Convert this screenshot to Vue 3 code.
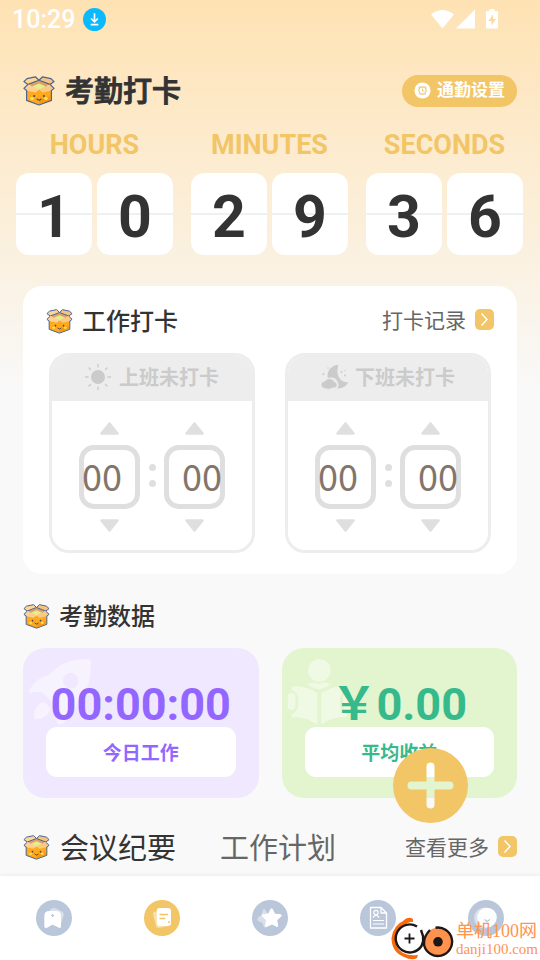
<script setup>
import { ref, h } from 'vue'

const clock = [
  { label: 'HOURS', digits: ['1', '0'] },
  { label: 'MINUTES', digits: ['2', '9'] },
  { label: 'SECONDS', digits: ['3', '6'] },
]

const shifts = ref([
  { id: 'on', title: '上班未打卡', hour: 0, minute: 0 },
  { id: 'off', title: '下班未打卡', hour: 0, minute: 0 },
])

const fields = [
  { key: 'hour', label: '小时', max: 24 },
  { key: 'minute', label: '分钟', max: 60 },
]

const pad = (n) => String(n).padStart(2, '0')

function step(shift, field, delta) {
  shift[field.key] = (shift[field.key] + delta + field.max) % field.max
}

function setValue(shift, field, event) {
  const n = parseInt(event.target.value, 10)
  shift[field.key] = Number.isNaN(n) ? 0 : Math.min(Math.max(n, 0), field.max - 1)
  event.target.value = pad(shift[field.key])
}

const tabs = ['会议纪要', '工作计划']
const activeTab = ref(0)

const navItems = [
  { id: 'home', label: '首页' },
  { id: 'attendance', label: '考勤' },
  { id: 'star', label: '收藏' },
  { id: 'report', label: '报告' },
  { id: 'mine', label: '我的' },
]
const activeNav = ref('attendance')

const outline = { stroke: '#4a6590', 'stroke-width': 1.2, 'stroke-linejoin': 'round' }
const BoxIcon = () =>
  h('svg', { viewBox: '0 0 32 30', 'aria-hidden': 'true' }, [
    h('path', { d: 'M3.6 12V24.4L16 29L28.4 24.4V12L16 8Z', fill: '#ffaa1e', ...outline }),
    h('path', { d: 'M16 24V28.2L27.7 24V20Z', fill: '#f28c0c', opacity: 0.6 }),
    h('path', { d: 'M4.5 8L16 4.2L27.5 8L16 13.8Z', fill: '#dfa068' }),
    h('path', { d: 'M9 10.6L16 7.6L23 10.6L16 14Z', fill: '#e2f08c' }),
    h('path', { d: 'M0.9 5.6L4 2.6L12.4 0.8L16 4.2L5 8.4Z', fill: '#ffd596', ...outline }),
    h('path', { d: 'M31.1 5.6L28 2.6L19.6 0.8L16 4.2L27 8.4Z', fill: '#f8c380', ...outline }),
    h('path', { d: 'M5 8.4L0.9 12.4L4 14.8L12.5 16.6L16 13.4Z', fill: '#ffd090' }),
    h('path', { d: 'M27 8.4L31.1 12.4L28 14.8L19.5 16.6L16 13.4Z', fill: '#fcc983' }),
    h('path', { d: 'M5 8.4L0.9 12.4L4 14.8M27 8.4L31.1 12.4L28 14.8', fill: 'none', ...outline }),
    h('ellipse', { cx: 9, cy: 22.6, rx: 1.8, ry: 1.3, fill: '#ffe84a' }),
    h('ellipse', { cx: 23, cy: 22.6, rx: 1.8, ry: 1.3, fill: '#ffe84a' }),
    h('circle', { cx: 11.2, cy: 20, r: 1, fill: '#4a4250' }),
    h('circle', { cx: 20.8, cy: 20, r: 1, fill: '#4a4250' }),
    h('path', { d: 'M13.6 22.6Q16 25.6 18.4 22.6', fill: 'none', stroke: '#5a4440', 'stroke-width': 1.1 }),
  ])
</script>

<template>
  <div class="page">
    <header class="status">
      <span class="time">10:29</span>
      <svg class="download" viewBox="0 0 24 24" aria-hidden="true">
        <circle cx="12" cy="12" r="12" fill="#0cb9fb" />
        <path d="M12 5.5V14M8.5 11L12 14.5L15.5 11M8 17.3H16" fill="none" stroke="#fff" stroke-width="1.7" />
      </svg>
      <svg class="signals" viewBox="0 0 68 20" aria-hidden="true">
        <path d="M0 5.5Q11.500 -3.500 23 5.500L11.500 19.500Z" fill="#fff" />
        <path d="M25 19.500L44 0.500V19.500Z" fill="#fff" />
        <path d="M55 3Q55 2 56 2H58.500V0H63.500V2H66Q67 2 67 3V18.500Q67 19.500 66 19.500H56Q55 19.500 55 18.500Z" fill="#fff" />
        <path d="M62 5.500L57.500 12H60.500V16.500L65 10H62Z" fill="#fbd9a0" />
      </svg>
    </header>

    <div class="topbar">
      <BoxIcon class="box-lg" />
      <h1>考勤打卡</h1>
      <button type="button" class="pill">
        <svg viewBox="0 0 18 18" aria-hidden="true">
          <circle cx="9" cy="9" r="8.500" fill="#fff" />
          <g fill="none" stroke="#f2c566">
            <circle cx="9" cy="9" r="3.800" stroke-width="1.200" />
            <path d="M9 7V9.500H11M4.500 6.500L6.500 4.500M13.500 6.500L11.500 4.500M6.500 12.500L5.500 13.500M11.500 12.500L12.500 13.500" />
          </g>
        </svg>
        通勤设置
      </button>
    </div>

    <main>
      <section class="clock" aria-label="时钟">
        <div v-for="unit in clock" :key="unit.label" class="unit">
          <span class="unit-label">{{ unit.label }}</span>
          <div class="digits">
            <span v-for="(d, i) in unit.digits" :key="i" class="digit">{{ d }}</span>
          </div>
        </div>
      </section>

      <section class="punch">
        <div class="head">
          <BoxIcon class="box" />
          <h2>工作打卡</h2>
          <a href="#records" class="more">
            打卡记录
            <svg viewBox="0 0 19 21" aria-hidden="true">
              <rect width="19" height="21" rx="5" fill="#f2c566" />
              <path d="M6.500 4.500L12 10.500L6.500 16.500" fill="none" stroke="#fff" stroke-width="1.500" />
            </svg>
          </a>
        </div>

        <div class="panels">
          <div v-for="shift in shifts" :key="shift.id" class="panel">
            <h3>
              <svg v-if="shift.id === 'on'" viewBox="0 0 27 26" aria-hidden="true">
                <circle cx="13" cy="13" r="7" fill="#cbcbcb" />
                <path
                  d="M13 0.500V3M13 23V25.500M0.500 13H3M23 13H25.500M4 4L5.500 5.500M20.500 20.500L22 22M22 4L20.500 5.500M5.500 20.500L4 22"
                  stroke="#cbcbcb" stroke-width="1.400" stroke-linecap="round" />
              </svg>
              <svg v-else viewBox="0 0 27 26" aria-hidden="true">
                <path d="M17.300 0.800C9.500 1.500 5.500 8 6.800 14C12 12.500 16 15 16.500 18C18.500 20 17.500 22.500 16 24.500C21 24.800 25.500 22.500 27 18.300C18.500 18.500 14.500 11 17.300 0.800Z" fill="#cbcbcb" />
                <path d="M3.500 24.500Q0 23.800 0 20.800Q0 17.600 3.500 17.300Q5 14.500 8.500 14.600Q12 14.600 13.200 17.500Q16.500 18.300 16.200 21.500Q15.500 24.500 12 24Q8 26.500 3.500 24.500Z" fill="#cbcbcb" stroke="#ededed" stroke-width="0.800" />
                <circle cx="2.500" cy="10" r="1" fill="#cbcbcb" />
                <circle cx="7" cy="4" r="0.700" fill="#cbcbcb" />
                <circle cx="20.500" cy="8" r="1" fill="#cbcbcb" />
                <circle cx="24" cy="6.500" r="0.700" fill="#cbcbcb" />
                <circle cx="24" cy="11.500" r="1" fill="#cbcbcb" />
              </svg>
              {{ shift.title }}
            </h3>
            <div class="picker">
              <div v-for="field in fields" :key="field.key" class="col" :class="field.key">
                <button type="button" :aria-label="`${field.label}加`" @click="step(shift, field, 1)">
                  <svg viewBox="0 0 19 13" aria-hidden="true">
                    <path d="M9.500 1.500L17.500 11.500H1.500Z" fill="#dfdfdf" stroke="#dfdfdf" stroke-width="2.500" stroke-linejoin="round" />
                  </svg>
                </button>
                <input
                  type="text" inputmode="numeric" :aria-label="`${shift.title}${field.label}`"
                  :value="pad(shift[field.key])" @change="setValue(shift, field, $event)" />
                <button type="button" :aria-label="`${field.label}减`" @click="step(shift, field, -1)">
                  <svg viewBox="0 0 19 13" aria-hidden="true">
                    <path d="M9.500 11.500L17.500 1.500H1.500Z" fill="#dfdfdf" stroke="#dfdfdf" stroke-width="2.500" stroke-linejoin="round" />
                  </svg>
                </button>
              </div>
              <span class="colon" aria-hidden="true"><i></i><i></i></span>
            </div>
          </div>
        </div>
      </section>

      <div class="head section-head">
        <BoxIcon class="box" />
        <h2>考勤数据</h2>
      </div>

      <section class="stats">
        <article class="stat purple">
          <svg class="deco" viewBox="0 0 76 80" aria-hidden="true">
            <path
              fill-rule="evenodd"
              d="M65 11C50 10 36 15 26 27Q14 29 6 42Q4 46 9 45Q16 42 21 46Q27 53 34 58Q37 65 34 73Q34 78 39 76Q51 68 55 54Q68 42 68 14Q68 11 65 11ZM47.700 25a7.700 7.700 0 1 1 0 15.400a7.700 7.700 0 1 1 0 -15.400Z"
              fill="#fff" />
            <path d="M21 54Q11 56 11 69Q11 72 15 71Q26 69 28 60Z" fill="#fff" />
          </svg>
          <strong>00:00:00</strong>
          <span>今日工作</span>
        </article>
        <article class="stat green">
          <svg class="deco" viewBox="0 0 76 80" aria-hidden="true">
            <g fill="#fff">
              <circle cx="37.300" cy="22.500" r="11.300" />
              <path d="M25.500 36.500Q32 33 37.300 36Q43 33 49 36.500Q43 40 37.300 41.500Q31 40 25.500 36.500Z" />
              <path d="M35.300 45Q23 37 10 38.500Q9 40 9.500 42Q16.500 44 16.500 54Q16.500 64 9.500 66Q9 69 11 69.500Q23 68 35.300 77Z" />
              <path d="M39.300 45Q51.500 37 64.600 38.500Q65.600 40 65.100 42Q58 44 58 54Q58 64 65.100 66Q65.600 69 63.600 69.500Q51.500 68 39.300 77Z" />
              <rect x="5.700" y="45" width="7.600" height="17" rx="3.800" />
              <rect x="61" y="45" width="7.600" height="17" rx="3.800" />
            </g>
          </svg>
          <strong>￥0.00</strong>
          <span>平均收益</span>
        </article>
      </section>

      <div class="head section-head tabs">
        <BoxIcon class="box" />
        <button
          v-for="(tab, i) in tabs" :key="tab" type="button" class="tab"
          :class="{ active: activeTab === i }" @click="activeTab = i">{{ tab }}</button>
        <a href="#more" class="more">
          查看更多
          <svg viewBox="0 0 19 21" aria-hidden="true">
            <rect width="19" height="21" rx="5" fill="#f2c566" />
            <path d="M6.500 4.500L12 10.500L6.500 16.500" fill="none" stroke="#fff" stroke-width="1.500" />
          </svg>
        </a>
      </div>
    </main>

    <nav class="nav">
      <a
        v-for="item in navItems" :key="item.id" :href="`#${item.id}`" :aria-label="item.label"
        :class="{ active: activeNav === item.id }" @click="activeNav = item.id">
        <svg viewBox="0 0 36 36" aria-hidden="true">
          <circle cx="18" cy="18" r="18" fill="currentColor" />
          <template v-if="item.id === 'home'">
            <path d="M14 9.500Q18 6.500 22 9.500L26 11.500Q28.500 13 27.500 16L24 27L12 24Z" fill="#fff" opacity="0.45" />
            <path d="M8.300 16Q8.300 11 13.300 11H20Q25 11 25 16V26Q25 29 22.500 27.500L16.600 24.500L11 27.800Q8.300 29 8.300 26Z" fill="#fff" />
            <path d="M16.600 14V17M15.100 15.500H18.100" stroke="currentColor" stroke-width="1.200" />
          </template>
          <template v-else-if="item.id === 'attendance'">
            <path d="M10 12L20 9.500L24 26L15 28Q12.500 28.500 12 26L9 14Q8.700 12.400 10 12Z" fill="#fff" opacity="0.45" />
            <path d="M15.500 8H24Q27 8 27 11V23Q27 26 24 26H15.500Q12.800 26 12.800 23V11Q12.800 8 15.500 8Z" fill="#fff" />
            <path d="M15.500 14.500H24M15.500 18.500H21.500M24 22H26" stroke="currentColor" stroke-width="1.400" />
          </template>
          <template v-else-if="item.id === 'star'">
            <path d="M12 10L15 14L20 15L18 25L13 26.500L11 22L6.500 20Q6 19 7 18L10 16Z" fill="#fff" stroke="#fff" stroke-width="2" stroke-linejoin="round" opacity="0.45" />
            <path d="M19.600 9.500L22.200 14.700L28.500 15.500L24 19.700L25 25.700L19.600 23L14.200 25.700L15.200 19.700L10.800 15.500L17 14.700Z" fill="#fff" stroke="#fff" stroke-width="2.400" stroke-linejoin="round" />
          </template>
          <template v-else-if="item.id === 'report'">
            <path d="M10.500 7.500H21L26.500 13V28H10.500ZM21 7.500V13H26.500" fill="none" stroke="#fff" stroke-width="1.300" stroke-linejoin="round" />
            <circle cx="16" cy="12.500" r="2.200" fill="none" stroke="#fff" stroke-width="1.200" />
            <path d="M12.800 17.500L16 14.500L19.200 17.500M13 20.500H24M13 24H24" fill="none" stroke="#fff" stroke-width="1.200" />
          </template>
          <template v-else>
            <circle cx="16.500" cy="18" r="10.500" fill="#fff" opacity="0.45" />
            <circle cx="19" cy="17.500" r="9.800" fill="#fff" />
            <path d="M16.500 19.500L19.200 21.500L22 19.500" fill="none" stroke="currentColor" stroke-width="1.400" />
          </template>
        </svg>
      </a>
    </nav>

    <button type="button" class="fab" aria-label="新增">
      <svg viewBox="0 0 75 75" aria-hidden="true">
        <path
          fill-rule="evenodd" fill="#f2c566"
          d="M37.500 0a37.500 37.500 0 1 1 0 75a37.500 37.500 0 1 1 0 -75ZM33.500 18.500V33.500H18.500a4 4 0 0 0 0 8H33.500V56.500a4 4 0 0 0 8 0V41.500H56.500a4 4 0 0 0 0 -8H41.500V18.500a4 4 0 0 0 -8 0Z" />
      </svg>
    </button>

    <div class="brand">
      <svg viewBox="0 0 64 44" aria-hidden="true">
        <path d="M23 5Q19 1.500 16 3.500Q3 9 1.500 22Q1.500 36 14 41Q22 45 27 42L28 39Q12 41 6.500 30Q1 12 23 5Z" fill="#fb6a0a" />
        <path d="M13 5Q18 -0.500 23 3V6Q17 4.500 12 8Z" fill="#fb6a0a" />
        <circle cx="19.500" cy="22.500" r="14" fill="#fff" />
        <path d="M27 10.500A14 14 0 1 0 31.500 30Q34 25 33 20L31 14" fill="none" stroke="#1d1715" stroke-width="2.400" />
        <path d="M19.500 17.500V27.500M14.500 22.500H24.500" stroke="#1d1715" stroke-width="1.800" />
        <circle cx="48" cy="25.800" r="14" fill="#ff924d" />
        <path d="M45.500 11.800A14.200 14.200 0 1 1 34.200 29.500Q33 21 40 14" fill="none" stroke="#1d1715" stroke-width="2.400" />
        <circle cx="48" cy="25.800" r="4.800" fill="#1d1715" />
      </svg>
      <p><b>单机100网</b><small>danji100.com</small></p>
    </div>
  </div>
</template>

<style>
body {
  background: #f9f9f9;
}
</style>

<style scoped>
.page {
  --gold: #f2c566;
  box-sizing: border-box;
  position: relative;
  display: flex;
  flex-direction: column;
  min-height: 100vh;
  background: linear-gradient(#fee2b3 0, #fdeacb 130px, #faf2e4 280px, #f9f9f9 390px);
  color: #333;
  font-family: Roboto, "Noto Sans CJK SC", sans-serif;
}

.page *,
.page *::before {
  box-sizing: border-box;
}

h1,
h2,
h3,
p {
  margin: 0;
}

svg {
  display: block;
  flex: none;
}

button {
  padding: 0;
  border: 0;
  background: none;
  color: inherit;
  font: inherit;
  cursor: pointer;
}

a {
  color: inherit;
  text-decoration: none;
}

.status {
  display: flex;
  align-items: center;
  height: 38px;
  padding: 0 41px 0 12px;
  color: #fff;
}

.time {
  padding-top: 2px;
  font-size: 25px;
  font-weight: 500;
  line-height: 38px;
}

.download {
  width: 23px;
  height: 23px;
  margin-left: 8px;
}

.signals {
  width: 68px;
  height: 20px;
  margin-left: auto;
}

.topbar {
  display: flex;
  align-items: center;
  height: 32px;
  margin: 37px 23px 0;
}

.box-lg {
  width: 32px;
  height: 30px;
}

h1 {
  margin-left: 10px;
  padding-top: 2px;
  font-size: 29px;
  font-weight: 500;
  line-height: 32px;
  -webkit-text-stroke: 1px #333;
  stroke-linejoin: round;
}

.pill {
  display: flex;
  align-items: center;
  gap: 6px;
  height: 32px;
  margin-left: auto;
  padding: 0 12px 2px;
  border-radius: 16px;
  background: var(--gold);
  color: #fff;
  font-size: 17px;
  font-weight: 700;
  line-height: 30px;
}

.pill svg {
  width: 17px;
  height: 17px;
}

.clock {
  display: grid;
  grid-template-columns: repeat(3, 1fr);
  gap: 18px;
  margin: 22px 17px 0 16px;
}

.unit-label {
  display: block;
  margin-bottom: 12px;
  color: var(--gold);
  font-size: 27px;
  font-weight: 700;
  line-height: 32px;
  text-align: center;
}

.digits {
  display: grid;
  grid-template-columns: 1fr 1fr;
  gap: 5px;
}

.digit {
  height: 82px;
  border-radius: 13px;
  background: linear-gradient(#fff 40px, #eef1f1 40px, #eef1f1 42px, #fff 42px);
  font-size: 59px;
  font-weight: 700;
  line-height: 88px;
  text-align: center;
}

.punch {
  margin: 31px 23px 0;
  padding: 23px 23px 21px;
  border-radius: 19px;
  background: #fff;
}

.head {
  display: flex;
  align-items: center;
  height: 24px;
}

.box {
  width: 27px;
  height: 25px;
}

h2 {
  margin-left: 9px;
  padding-top: 2px;
  font-size: 24px;
  font-weight: 500;
  line-height: 24px;
}

.more {
  display: flex;
  align-items: center;
  gap: 9px;
  margin-left: auto;
  color: #666;
  font-size: 21px;
  line-height: 24px;
}

.more svg {
  width: 19px;
  height: 21px;
  margin-bottom: 3px;
}

.panels {
  display: grid;
  grid-template-columns: 1fr 1fr;
  gap: 30px;
  margin: 20px 3px 0;
}

.panel {
  overflow: hidden;
  border: 3px solid #ededed;
  border-radius: 20px;
}

h3 {
  display: flex;
  align-items: center;
  justify-content: center;
  gap: 7px;
  height: 45px;
  padding-bottom: 4px;
  background: #ededed;
  color: #cbcbcb;
  font-size: 20px;
  font-weight: 700;
}

h3 svg {
  width: 27px;
  height: 26px;
}

.picker {
  position: relative;
  display: flex;
  justify-content: center;
  gap: 24px;
  padding: 21px 0 18px;
}

.col {
  display: flex;
  flex-direction: column;
  align-items: center;
  gap: 10px;
}

.col svg {
  width: 19px;
  height: 13px;
}

.col input {
  width: 61px;
  height: 64px;
  margin: 0;
  padding: 0 3px 4px;
  border: 0;
  border-radius: 15px;
  outline: 0;
  background: none;
  box-shadow: inset 0 0 0 5px #dfdfdf;
  color: #84756b;
  font-family: "Noto Sans CJK SC", sans-serif;
  font-size: 36px;
}

.col.minute input {
  text-align: right;
}

.colon {
  position: absolute;
  inset: 0;
  display: flex;
  flex-direction: column;
  align-items: center;
  justify-content: center;
  gap: 9px;
  pointer-events: none;
}

.colon i {
  width: 7px;
  height: 7px;
  border-radius: 50%;
  background: #dfdfdf;
}

.section-head {
  margin: 30px 23px 0;
}

.stats {
  display: grid;
  grid-template-columns: 1fr 1fr;
  gap: 23px;
  margin: 20px 23px 0;
}

.stat {
  position: relative;
  display: flex;
  flex-direction: column;
  height: 150px;
  padding: 32px 23px 21px;
  border-radius: 22px;
}

.purple {
  background: #f0e8fe;
  color: #9367ff;
}

.green {
  background: #e2f5cf;
  color: #36b98b;
}

.deco {
  position: absolute;
  top: 0;
  left: 0;
  width: 76px;
  height: 80px;
  opacity: 0.45;
}

.stat strong {
  position: relative;
  padding-top: 2px;
  font-size: 45px;
  font-weight: 700;
  line-height: 45px;
  text-align: center;
  white-space: nowrap;
}

.stat span {
  position: relative;
  flex: 1;
  padding-top: 4px;
  border-radius: 11px;
  background: #fff;
  font-size: 19px;
  font-weight: 700;
  line-height: 46px;
  text-align: center;
}

.tabs {
  height: 38px;
}

.tab {
  margin-left: 10px;
  padding-top: 4px;
  color: #666;
  font-size: 29px;
  font-weight: 400;
  line-height: 38px;
}

.tab + .tab {
  margin-left: 44px;
}

.tab.active {
  color: #333;
}

.tabs .more {
  padding-top: 2px;
}

.nav {
  display: grid;
  grid-template-columns: repeat(5, 1fr);
  align-items: center;
  justify-items: center;
  height: 84px;
  margin-top: auto;
  background: #fff;
  box-shadow: 0 -1px 4px rgba(0, 0, 0, 0.06);
}

.nav a {
  color: #bac6da;
}

.nav a.active {
  color: var(--gold);
}

.nav svg {
  width: 36px;
  height: 36px;
}

.fab {
  position: absolute;
  right: 72px;
  bottom: 137px;
  width: 75px;
  height: 75px;
  border-radius: 50%;
}

.fab svg {
  width: 75px;
  height: 75px;
}

.brand {
  position: absolute;
  right: 2px;
  bottom: 0;
  display: flex;
  align-items: center;
  gap: 2px;
  color: #ff9350;
  font-family: "Liberation Serif", "Noto Sans CJK SC", serif;
  pointer-events: none;
}

.brand svg {
  width: 64px;
  height: 44px;
}

.brand b,
.brand small {
  display: block;
  font-weight: 400;
  white-space: nowrap;
}

.brand b {
  padding-top: 4px;
  font-size: 18px;
  line-height: 18px;
}

.brand small {
  font-size: 15px;
  line-height: 18px;
}
</style>
